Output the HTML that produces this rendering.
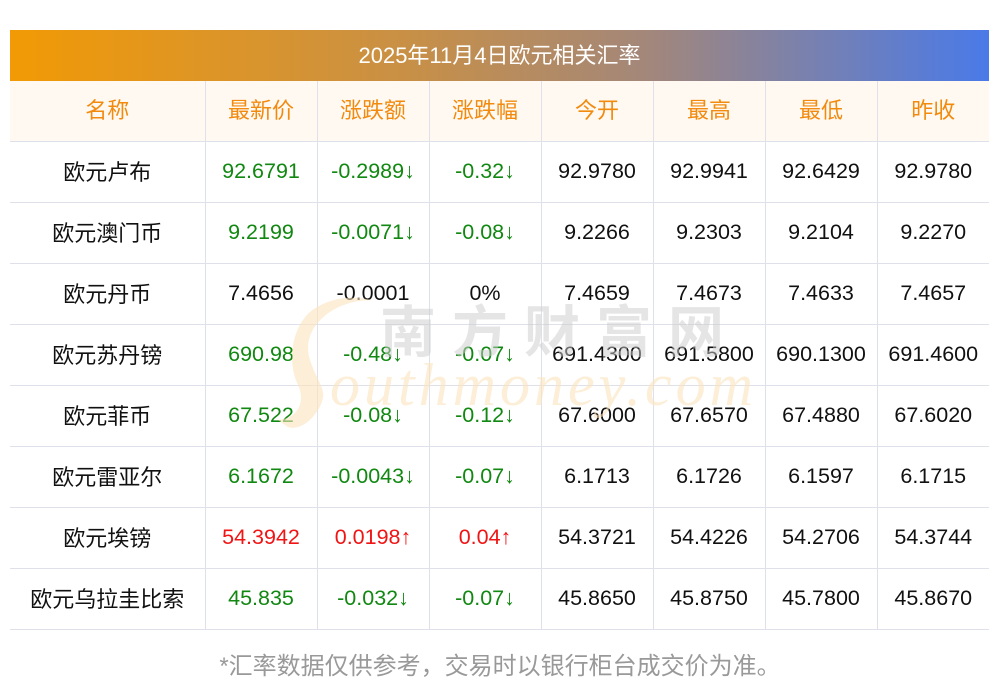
<!DOCTYPE html>
<html><head><meta charset="utf-8"><style>
body{margin:0;background:#fff;width:1000px;height:697px;overflow:hidden;position:relative;font-family:"Liberation Sans","Noto Sans CJK SC",sans-serif}
.title{position:absolute;left:10px;top:30px;width:979px;height:51px;background:linear-gradient(90deg,#f29a05,#c99045 40%,#a3877a 65%,#4a7ae8);color:#fff;font-size:22px;line-height:51px;text-align:center}
table{position:absolute;left:10px;top:81px;width:979px;border-collapse:collapse;table-layout:fixed}
td{height:57px;border-bottom:1px solid #dfe1ea;border-left:1px solid #dfe1ea;text-align:center;font-size:21.5px;color:#111;padding:0 0 3px 0;white-space:nowrap;vertical-align:middle;line-height:24px}
td:first-child{border-left:none}
td.n span{position:relative;top:2px;font-size:22px}
tr.h td{background:#fff9f2;color:#f28a0e;font-size:22px;padding:0;height:60px}
.g{color:#118811}.r{color:#f01414}
.foot{position:absolute;top:646px;left:0;width:1000px;text-align:center;color:#999;font-size:24px}
.wm{position:absolute;left:0;top:0;pointer-events:none}
</style></head><body>
<div class="title">2025年11月4日欧元相关汇率</div>
<table>
<colgroup><col style="width:195px"><col span="7" style="width:112px"></colgroup>
<tr class="h"><td>名称</td><td>最新价</td><td>涨跌额</td><td>涨跌幅</td><td>今开</td><td>最高</td><td>最低</td><td>昨收</td></tr>
<tr><td class="n"><span>欧元卢布</span></td><td class="g">92.6791</td><td class="g">-0.2989↓</td><td class="g">-0.32↓</td><td>92.9780</td><td>92.9941</td><td>92.6429</td><td>92.9780</td></tr>
<tr><td class="n"><span>欧元澳门币</span></td><td class="g">9.2199</td><td class="g">-0.0071↓</td><td class="g">-0.08↓</td><td>9.2266</td><td>9.2303</td><td>9.2104</td><td>9.2270</td></tr>
<tr><td class="n"><span>欧元丹币</span></td><td>7.4656</td><td>-0.0001</td><td>0%</td><td>7.4659</td><td>7.4673</td><td>7.4633</td><td>7.4657</td></tr>
<tr><td class="n"><span>欧元苏丹镑</span></td><td class="g">690.98</td><td class="g">-0.48↓</td><td class="g">-0.07↓</td><td>691.4300</td><td>691.5800</td><td>690.1300</td><td>691.4600</td></tr>
<tr><td class="n"><span>欧元菲币</span></td><td class="g">67.522</td><td class="g">-0.08↓</td><td class="g">-0.12↓</td><td>67.6000</td><td>67.6570</td><td>67.4880</td><td>67.6020</td></tr>
<tr><td class="n"><span>欧元雷亚尔</span></td><td class="g">6.1672</td><td class="g">-0.0043↓</td><td class="g">-0.07↓</td><td>6.1713</td><td>6.1726</td><td>6.1597</td><td>6.1715</td></tr>
<tr><td class="n"><span>欧元埃镑</span></td><td class="r">54.3942</td><td class="r">0.0198↑</td><td class="r">0.04↑</td><td>54.3721</td><td>54.4226</td><td>54.2706</td><td>54.3744</td></tr>
<tr><td class="n"><span>欧元乌拉圭比索</span></td><td class="g">45.835</td><td class="g">-0.032↓</td><td class="g">-0.07↓</td><td>45.8650</td><td>45.8750</td><td>45.7800</td><td>45.8670</td></tr>
</table>
<svg class="wm" width="1000" height="697">
<path d="M372 300 C330 300 300 330 310 360 C318 385 330 390 318 410 C305 430 290 430 285 425 L278 420 C300 418 305 400 298 385 C288 365 290 330 310 312 C330 296 355 296 372 300Z" fill="#fbe3bd" opacity="0.6"/>
<text x="380" y="352" font-family="Noto Sans CJK SC,sans-serif" font-size="56" font-weight="bold" fill="#ccc" opacity="0.5" letter-spacing="16">南方财富网</text>
<text x="330" y="405" font-family="Liberation Serif,serif" font-style="italic" font-size="60" fill="#fbe3bd" opacity="0.6" letter-spacing="4">outhmoney.com</text>
</svg>
<div class="foot">*汇率数据仅供参考，交易时以银行柜台成交价为准。</div>
</body></html>
